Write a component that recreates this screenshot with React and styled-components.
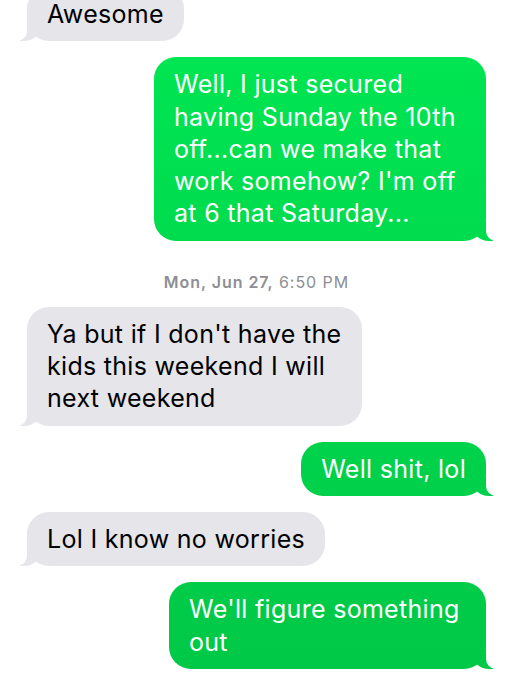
import styled, { createGlobalStyle, css } from "styled-components";

const GlobalStyle = createGlobalStyle`
  html, body {
    margin: 0;
    padding: 0;
    background: #fff;
    overflow: hidden;
  }
  body {
    font-family: Inter, "Liberation Sans", Arial, sans-serif;
    -webkit-font-smoothing: antialiased;
  }
`;

const messages = [
  { id: 1, mine: false, text: "Awesome" },
  {
    id: 2,
    mine: true,
    width: 332,
    text: "Well, I just secured\nhaving Sunday the 10th\noff...can we make that\nwork somehow? I'm off\nat 6 that Saturday...",
  },
  { id: 3, stamp: true },
  {
    id: 4,
    mine: false,
    width: 335,
    text: "Ya but if I don't have the\nkids this weekend I will\nnext weekend",
  },
  { id: 5, mine: true, text: "Well shit, lol" },
  { id: 6, mine: false, text: "Lol I know no worries" },
  { id: 7, mine: true, width: 317, text: "We'll figure something\nout" },
];

const App = () => {
  return (
    <>
      <GlobalStyle />
      <Thread>
        {messages.map((m) =>
          m.stamp ? (
            <Timestamp key={m.id}>
              <strong>Mon, Jun 27,</strong> 6:50 PM
            </Timestamp>
          ) : (
            <Row key={m.id} $mine={m.mine}>
              <Bubble $mine={m.mine} $width={m.width}>
                {m.text}
              </Bubble>
            </Row>
          )
        )}
      </Thread>
    </>
  );
};

export default App;

const green = css`
  background: linear-gradient(180deg, #00e853 0%, #00d84d 45%, #00c847 100%)
    fixed;
`;

const Thread = styled.div`
  display: flex;
  flex-direction: column;
  gap: 16px;
  margin-top: -13px;
  padding: 0 26px 0 27px;
`;

const Row = styled.div`
  display: flex;
  justify-content: ${(p) => (p.$mine ? "flex-end" : "flex-start")};
`;

const Timestamp = styled.div`
  padding-top: 16px;
  text-align: center;
  font-size: 16px;
  line-height: 18px;
  color: #8e8e93;
  letter-spacing: 0.95px;

  strong {
    font-weight: 600;
  }
`;

const Bubble = styled.div`
  position: relative;
  box-sizing: border-box;
  width: ${(p) => (p.$width ? `${p.$width}px` : "auto")};
  padding: 11px 20px;
  border-radius: 22px;
  font-size: 25px;
  line-height: 32.3px;
  letter-spacing: 0.3px;
  white-space: pre;
  color: ${(p) => (p.$mine ? "#fff" : "#000")};
  background: #e5e5ea;
  ${(p) => p.$mine && green}

  &::before,
  &::after {
    content: "";
    position: absolute;
    bottom: 0;
    height: 20px;
  }

  &::before {
    width: 20px;
    background: #e5e5ea;
    ${(p) => p.$mine && green}
    ${(p) =>
      p.$mine
        ? css`
            right: -7px;
            border-bottom-left-radius: 16px 14px;
          `
        : css`
            left: -7px;
            border-bottom-right-radius: 16px 14px;
          `}
  }

  &::after {
    width: 26px;
    background: #fff;
    ${(p) =>
      p.$mine
        ? css`
            right: -26px;
            border-bottom-left-radius: 10px;
          `
        : css`
            left: -26px;
            border-bottom-right-radius: 10px;
          `}
  }
`;
